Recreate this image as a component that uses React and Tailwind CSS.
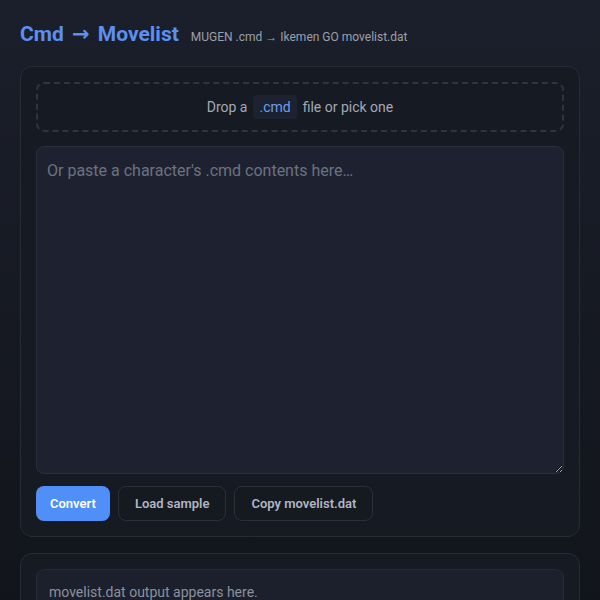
import { useState } from "react";

function App() {
  // =========================
  // STATES
  // =========================

  const [source, setSource] = useState("");

  const [output, setOutput] = useState("");

  // =========================
  // UI
  // =========================

  return (
    <div
      className="min-h-screen bg-gradient-to-b from-[#1b1f2b] via-[#151820] to-[#0e1015] px-5 pt-5 pb-10 text-[#c9ced8]"
      style={{ fontFamily: "Roboto, 'Liberation Sans', sans-serif" }}
    >
      {/* Header */}

      <div className="flex items-baseline gap-3 mb-[18px]">
        <h1 className="text-[21px] leading-7 font-bold text-[#5b8ff0]">
          Cmd{" "}
          <span
            className="mx-[3px]"
            style={{ fontFamily: "'DejaVu Sans', sans-serif" }}
          >
            →
          </span>{" "}
          Movelist
        </h1>
        <span className="text-xs text-[#9aa0ab]">
          MUGEN .cmd → Ikemen GO movelist.dat
        </span>
      </div>

      {/* Input card */}

      <div className="rounded-xl border border-[#262b36] bg-[#161a23] p-[15px]">
        <div className="flex h-[50px] items-center justify-center rounded-lg border-2 border-dashed border-[#2f3440] text-sm text-[#a3a9b5]">
          Drop a
          <span className="mx-1.5 rounded bg-[#1d2230] px-1.5 py-0.5 text-[#6f9df3]">
            .cmd
          </span>
          file or pick one
        </div>

        <textarea
          value={source}
          onChange={(e) => setSource(e.target.value)}
          placeholder="Or paste a character's .cmd contents here…"
          className="mt-[14px] block h-[328px] w-full resize-y rounded-lg border border-[#2a2f3b] bg-[#1e2230] px-2.5 py-3 text-base text-[#c9ced8] placeholder:text-[#6c7280] outline-none"
        />

        <div className="mt-3 flex gap-2">
          <button className="h-[35px] rounded-lg bg-[#4f8ff7] px-3.5 text-[13px] font-semibold text-white">
            Convert
          </button>
          <button className="h-[35px] rounded-lg border border-[#2a2f3a] bg-[#151920] px-4 text-[13px] font-semibold text-[#b0b6c1]">
            Load sample
          </button>
          <button className="h-[35px] rounded-lg border border-[#2a2f3a] bg-[#151920] px-4 text-[13px] font-semibold text-[#b0b6c1]">
            Copy movelist.dat
          </button>
        </div>
      </div>

      {/* Output card */}

      <div className="mt-4 rounded-xl border border-[#262b36] bg-[#161a23] p-[15px]">
        <pre
          className="min-h-[200px] rounded-lg border border-[#262b37] bg-[#1c202c] px-3 py-3 text-sm text-[#8b919d] whitespace-pre-wrap"
          style={{ fontFamily: "Roboto, 'Liberation Sans', sans-serif" }}
        >
          {output || "movelist.dat output appears here."}
        </pre>
      </div>
    </div>
  );
}

export default App;
